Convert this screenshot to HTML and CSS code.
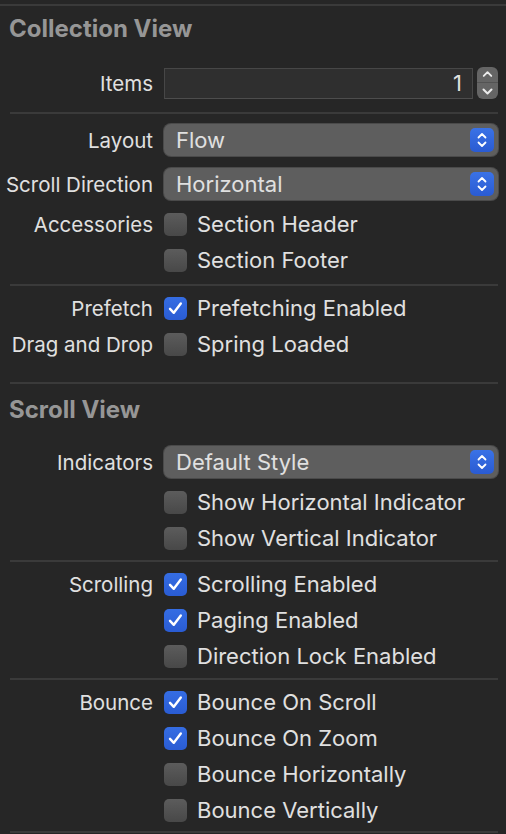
FILE: index.html
```html
<!DOCTYPE html>
<html>
<head>
<meta charset="utf-8">
<link rel="stylesheet" href="styles.css">
</head>
<body>
<div class="topline"></div>

<div class="header header-first">Collection View</div>
<div class="section section-items">
  <div class="row tall">
    <div class="label">Items</div>
    <div class="control stepper-wrap">
      <div class="field">1</div>
      <div class="stepper">
        <svg class="step-up" width="21" height="16" viewBox="0 0 21 16"><path d="M6.5 9.5 L10.5 5.5 L14.5 9.5" fill="none" stroke="#ececec" stroke-width="2" stroke-linecap="round" stroke-linejoin="round"/></svg>
        <svg class="step-down" width="21" height="16" viewBox="0 0 21 16"><path d="M6.5 6.5 L10.5 10.5 L14.5 6.5" fill="none" stroke="#ececec" stroke-width="2" stroke-linecap="round" stroke-linejoin="round"/></svg>
      </div>
    </div>
  </div>
</div>
<div class="divider"></div>

<div class="section section-a">
  <div class="row tall">
    <div class="label">Layout</div>
    <div class="control popup"><span>Flow</span>
      <span class="popbtn"><svg width="24" height="24" viewBox="0 0 24 24"><path d="M8.5 9.5 L12 6 L15.5 9.5 M8.5 14.5 L12 18 L15.5 14.5" fill="none" stroke="#fff" stroke-width="1.8" stroke-linecap="round" stroke-linejoin="round"/></svg></span>
    </div>
  </div>
  <div class="row tall">
    <div class="label">Scroll Direction</div>
    <div class="control popup"><span>Horizontal</span>
      <span class="popbtn"><svg width="24" height="24" viewBox="0 0 24 24"><path d="M8.5 9.5 L12 6 L15.5 9.5 M8.5 14.5 L12 18 L15.5 14.5" fill="none" stroke="#fff" stroke-width="1.8" stroke-linecap="round" stroke-linejoin="round"/></svg></span>
    </div>
  </div>
  <div class="row">
    <div class="label">Accessories</div>
    <label class="control check"><span class="box"></span>Section Header</label>
  </div>
  <div class="row">
    <div class="label"></div>
    <label class="control check"><span class="box"></span>Section Footer</label>
  </div>
</div>
<div class="divider"></div>

<div class="section section-b">
  <div class="row">
    <div class="label">Prefetch</div>
    <label class="control check"><span class="box on"><svg width="23" height="23" viewBox="0 0 23 23"><path d="M6 11.8 L9.8 15.8 L16.8 6.5" fill="none" stroke="#fff" stroke-width="2.4" stroke-linecap="round" stroke-linejoin="round"/></svg></span>Prefetching Enabled</label>
  </div>
  <div class="row">
    <div class="label">Drag and Drop</div>
    <label class="control check"><span class="box"></span>Spring Loaded</label>
  </div>
</div>
<div class="divider"></div>

<div class="header header-second">Scroll View</div>
<div class="section section-c">
  <div class="row tall">
    <div class="label">Indicators</div>
    <div class="control popup"><span>Default Style</span>
      <span class="popbtn"><svg width="24" height="24" viewBox="0 0 24 24"><path d="M8.5 9.5 L12 6 L15.5 9.5 M8.5 14.5 L12 18 L15.5 14.5" fill="none" stroke="#fff" stroke-width="1.8" stroke-linecap="round" stroke-linejoin="round"/></svg></span>
    </div>
  </div>
  <div class="row">
    <div class="label"></div>
    <label class="control check"><span class="box"></span>Show Horizontal Indicator</label>
  </div>
  <div class="row">
    <div class="label"></div>
    <label class="control check"><span class="box"></span>Show Vertical Indicator</label>
  </div>
</div>
<div class="divider"></div>

<div class="section">
  <div class="row">
    <div class="label">Scrolling</div>
    <label class="control check"><span class="box on"><svg width="23" height="23" viewBox="0 0 23 23"><path d="M6 11.8 L9.8 15.8 L16.8 6.5" fill="none" stroke="#fff" stroke-width="2.4" stroke-linecap="round" stroke-linejoin="round"/></svg></span>Scrolling Enabled</label>
  </div>
  <div class="row">
    <div class="label"></div>
    <label class="control check"><span class="box on"><svg width="23" height="23" viewBox="0 0 23 23"><path d="M6 11.8 L9.8 15.8 L16.8 6.5" fill="none" stroke="#fff" stroke-width="2.4" stroke-linecap="round" stroke-linejoin="round"/></svg></span>Paging Enabled</label>
  </div>
  <div class="row">
    <div class="label"></div>
    <label class="control check"><span class="box"></span>Direction Lock Enabled</label>
  </div>
</div>
<div class="divider"></div>

<div class="section section-last">
  <div class="row">
    <div class="label">Bounce</div>
    <label class="control check"><span class="box on"><svg width="23" height="23" viewBox="0 0 23 23"><path d="M6 11.8 L9.8 15.8 L16.8 6.5" fill="none" stroke="#fff" stroke-width="2.4" stroke-linecap="round" stroke-linejoin="round"/></svg></span>Bounce On Scroll</label>
  </div>
  <div class="row">
    <div class="label"></div>
    <label class="control check"><span class="box on"><svg width="23" height="23" viewBox="0 0 23 23"><path d="M6 11.8 L9.8 15.8 L16.8 6.5" fill="none" stroke="#fff" stroke-width="2.4" stroke-linecap="round" stroke-linejoin="round"/></svg></span>Bounce On Zoom</label>
  </div>
  <div class="row">
    <div class="label"></div>
    <label class="control check"><span class="box"></span>Bounce Horizontally</label>
  </div>
  <div class="row">
    <div class="label"></div>
    <label class="control check"><span class="box"></span>Bounce Vertically</label>
  </div>
</div>
<div class="divider"></div>
</body>
</html>
```
FILE: styles.css
```css
html, body {
  margin: 0;
  padding: 0;
  background: #262626;
}
body {
  width: 506px;
  height: 834px;
  overflow: hidden;
  font-family: Inter, "Noto Sans", sans-serif;
  font-size: 20.5px;
  color: #e0e0e0;
}
.topline {
  margin-top: 4px;
  height: 2px;
  background: #3a3a3a;
}
.header {
  height: 46px;
  line-height: 46px;
  padding-left: 9px;
  font-weight: 700;
  font-size: 24px;
  color: #969696;
}
.header-first { margin-bottom: 9px; }
.header-second { margin-top: 3px; margin-bottom: 3px; }
.section { padding: 4px 0 4px; }
.section-items { padding: 0 0 7px; }
.section-a { padding-bottom: 6px; }
.section-b { padding-bottom: 20px; }
.section-last { padding-bottom: 3px; }
.divider {
  height: 2px;
  background: #3a3a3a;
  margin: 0 8px 0 10px;
}
.row {
  display: grid;
  grid-template-columns: 153px 1fr;
  column-gap: 11px;
  align-items: center;
  height: 36px;
  width: 498px;
}
.row.tall { height: 44px; }
.label {
  text-align: right;
  white-space: nowrap;
}
.control { min-width: 0; }
.stepper-wrap {
  display: flex;
  align-items: center;
  gap: 4px;
}
.field {
  flex: 1;
  height: 29px;
  line-height: 29px;
  background: #2f2f2f;
  border: 1px solid #474747;
  border-bottom-color: #4d4d4d;
  text-align: right;
  padding-right: 10px;
  font-size: 22px;
}
.stepper {
  width: 21px;
  height: 32px;
  border-radius: 6px;
  background: #656565;
  display: flex;
  flex-direction: column;
  overflow: hidden;
}
.stepper svg { display: block; }
.step-up { border-bottom: 1px solid #535353; height: 15px; }
.popup {
  height: 32px;
  border-radius: 7px;
  background: #5e5e5e;
  box-shadow: 0 0 0 1px #4a4a4a;
  display: flex;
  align-items: center;
  justify-content: space-between;
  padding: 0 4px 0 12px;
  font-size: 22px;
}
.popbtn {
  width: 24px;
  height: 24px;
  border-radius: 5px;
  background: linear-gradient(#3a72e6, #2a5bd2);
}
.popbtn svg { display: block; }
.check {
  display: flex;
  align-items: center;
  gap: 10px;
  white-space: nowrap;
  font-size: 22px;
}
.box {
  width: 23px;
  height: 23px;
  border-radius: 5px;
  background: linear-gradient(#5c5c5c, #484848);
  flex: none;
}
.box.on {
  background: linear-gradient(#356de3, #2a5cd3);
}
.box svg { display: block; }
```
